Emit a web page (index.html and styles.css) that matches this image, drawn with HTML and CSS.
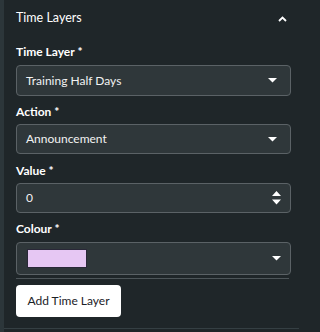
FILE: index.html
```html
<!DOCTYPE html>
<html lang="en">
<head>
<meta charset="utf-8">
<title>Time Layers</title>
<link rel="stylesheet" href="styles.css">
</head>
<body>
<div class="frame">
  <section class="panel">
    <header class="header">
      <h2 class="title">Time Layers</h2>
      <svg class="chev" width="9" height="6" viewBox="0 0 9 6"><path d="M1 5 L4.5 1.5 L8 5" fill="none" stroke="#fff" stroke-width="1.8"/></svg>
    </header>

    <div class="field f1">
      <label class="label">Time Layer *</label>
      <div class="control h31">
        <span class="value">Training Half Days</span>
        <svg class="caret" width="9" height="5" viewBox="0 0 9 5"><path d="M0 0 H9 L4.5 4.5 Z" fill="#fff"/></svg>
      </div>
    </div>

    <div class="field f2">
      <label class="label">Action *</label>
      <div class="control h30">
        <span class="value">Announcement</span>
        <svg class="caret" width="9" height="5" viewBox="0 0 9 5"><path d="M0 0 H9 L4.5 4.5 Z" fill="#fff"/></svg>
      </div>
    </div>

    <div class="field f3">
      <label class="label">Value *</label>
      <div class="control h30">
        <span class="value">0</span>
        <svg class="spin" width="9" height="14" viewBox="0 0 9 14"><path d="M0 5 H9 L4.5 0 Z M0 8.5 H9 L4.5 13.5 Z" fill="#fff"/></svg>
      </div>
    </div>

    <div class="field f4">
      <label class="label">Colour *</label>
      <div class="control h33 colour">
        <span class="swatch"></span>
        <svg class="caret" width="9" height="5" viewBox="0 0 9 5"><path d="M0 0 H9 L4.5 4.5 Z" fill="#fff"/></svg>
      </div>
      <div class="rule"></div>
    </div>

    <button class="btn" type="button">Add Time Layer</button>
  </section>
</div>
</body>
</html>
```

FILE: styles.css
```css
html, body {
  margin: 0;
  padding: 0;
}
body {
  width: 299px;
  height: 332px;
  background: #1f2629;
  font-family: Lato, "Noto Sans", sans-serif;
  color: #ffffff;
  overflow: hidden;
}
.frame {
  height: 332px;
  border-left: 4px solid #2c363a;
  box-sizing: border-box;
}
.panel {
  height: 329px;
  box-sizing: border-box;
  padding: 10px 8px 0 12px;
  border-bottom: 1px solid #353f43;
  display: flex;
  flex-direction: column;
  align-items: stretch;
}
.header {
  height: 16px;
  display: flex;
  align-items: center;
  justify-content: space-between;
  margin-bottom: 18px;
}
.title {
  margin: 0;
  font-size: 12.5px;
  font-weight: 400;
  line-height: 16px;
}
.chev {
  margin-right: 4px;
  margin-top: 1px;
}
.field {
  display: flex;
  flex-direction: column;
}
.f1 { margin-bottom: 8px; }
.f2 { margin-bottom: 9px; }
.f3 { margin-bottom: 8px; }
.label {
  font-size: 12px;
  font-weight: 700;
  line-height: 16px;
  margin-bottom: 4px;
}
.f1 .label, .f4 .label { margin-bottom: 5px; }
.control {
  box-sizing: border-box;
  display: flex;
  align-items: center;
  justify-content: space-between;
  border: 1px solid #5b6266;
  border-radius: 4px;
  background: #2f373a;
  padding: 0 13px 0 9px;
}
.h31 { height: 31px; }
.h30 { height: 30px; }
.h33 { height: 33px; }
.value {
  font-size: 12px;
  line-height: 16px;
  color: #f2f2f2;
}
.spin {
  margin-right: -4px;
}
.colour {
  padding-right: 9px;
}
.swatch {
  width: 60px;
  height: 19px;
  box-sizing: border-box;
  background: #e6c7f3;
  border: 1px solid #2a2838;
  margin-left: 1px;
}
.rule {
  height: 1px;
  background: #4d5559;
  margin: 3px 2px 0 0;
}
.btn {
  margin-top: 6px;
  align-self: flex-start;
  height: 32px;
  width: 105px;
  padding: 0;
  border: none;
  border-radius: 4px;
  background: #ffffff;
  color: #1b2127;
  font-family: Lato, "Noto Sans", sans-serif;
  font-size: 12px;
  line-height: 16px;
}
```
